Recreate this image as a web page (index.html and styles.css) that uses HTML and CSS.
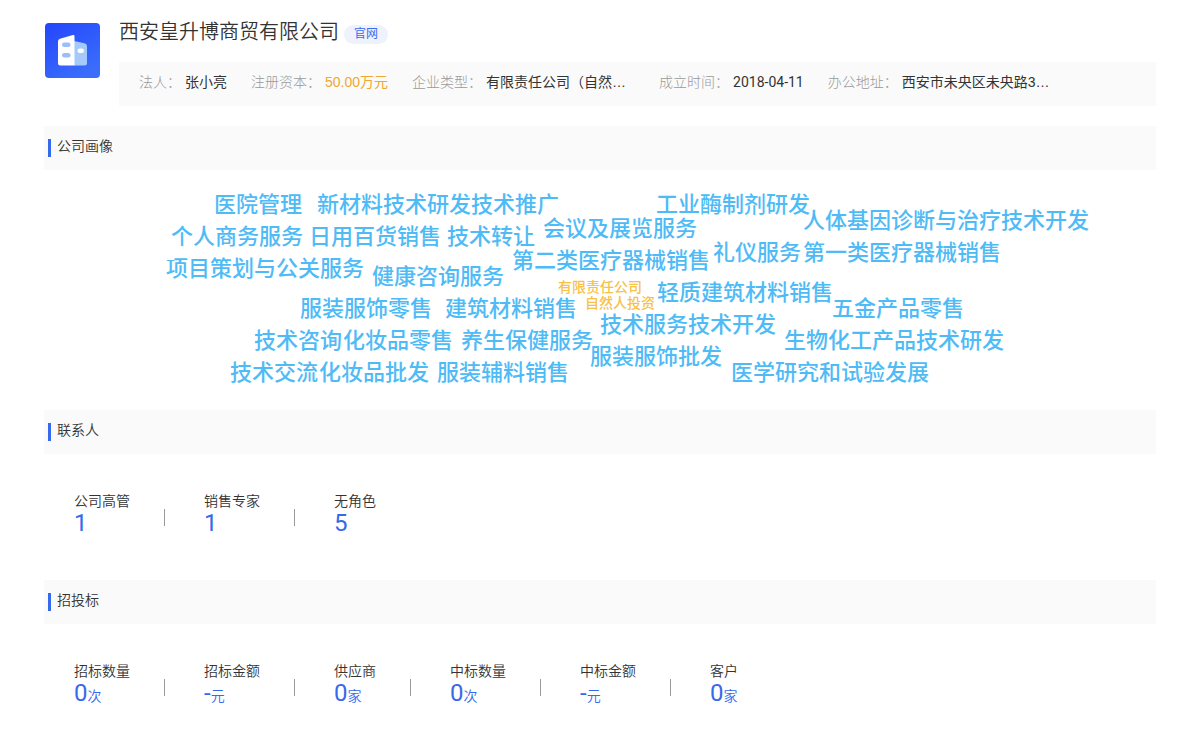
FILE: index.html
```html
<!DOCTYPE html>
<html lang="zh-CN">
<head>
<meta charset="utf-8">
<meta name="viewport" content="width=device-width, initial-scale=1">
<title>西安皇升博商贸有限公司</title>
<link rel="stylesheet" href="styles.css">
</head>
<body>
<main class="page">
  <header class="company">
    <svg class="logo" viewBox="0 0 55 55" aria-hidden="true">
      <defs>
        <linearGradient id="tile" x1="0" y1="0" x2="0.6" y2="1">
          <stop offset="0" stop-color="#2346fb"/>
          <stop offset="1" stop-color="#3a6dfb"/>
        </linearGradient>
      </defs>
      <rect width="55" height="55" rx="4" fill="url(#tile)"/>
      <path d="M29 18l10.500 2.200q2.500.6 2.500 3V40q0 2.500-2.500 2.500H29z" fill="#a3c9fd"/>
      <path d="M15 15.700q-2 .5-2 2.500V40q0 2.500 2.500 2.500H29.500V13.200q0-1.700-1.500-1.200z" fill="#fff"/>
      <rect x="17" y="19.500" width="8.500" height="4.500" rx="2.200" fill="#9dbdf8"/>
      <rect x="17" y="30" width="8.500" height="4.500" rx="2.200" fill="#9dbdf8"/>
      <rect x="32.500" y="25.500" width="6.500" height="4.500" rx="2.200" fill="#fff"/>
    </svg>
    <div class="company-main">
      <div class="company-title">
        <h1 class="company-name">西安皇升博商贸有限公司</h1>
        <a class="site-link" href="#">官网</a>
      </div>
      <dl class="facts">
        <div class="fact"><dt>法人：</dt><dd>张小亮</dd></div>
        <div class="fact"><dt>注册资本：</dt><dd class="money">50.00万元</dd></div>
        <div class="fact"><dt>企业类型：</dt><dd class="long">有限责任公司（自然…</dd></div>
        <div class="fact"><dt>成立时间：</dt><dd class="date">2018-04-11</dd></div>
        <div class="fact"><dt>办公地址：</dt><dd class="long">西安市未央区未央路3…</dd></div>
      </dl>
    </div>
  </header>

  <section>
    <h2 class="section-title">公司画像</h2>
    <ul class="cloud">
      <li style="--x:-386px;--y:19px">医院管理</li>
      <li style="--x:-283px;--y:19px">新材料技术研发</li>
      <li style="--x:-129px;--y:19px">技术推广</li>
      <li style="--x:56px;--y:19px">工业酶制剂研发</li>
      <li style="--x:203px;--y:35px">人体基因诊断与治疗技术开发</li>
      <li style="--x:-429px;--y:51px">个人商务服务</li>
      <li style="--x:-291px;--y:51px">日用百货销售</li>
      <li style="--x:-153px;--y:51px">技术转让</li>
      <li style="--x:-57px;--y:43px">会议及展览服务</li>
      <li style="--x:-434px;--y:83px">项目策划与公关服务</li>
      <li style="--x:-228px;--y:91px">健康咨询服务</li>
      <li style="--x:-88px;--y:75px">第二类医疗器械销售</li>
      <li style="--x:113px;--y:67px">礼仪服务</li>
      <li style="--x:203px;--y:67px">第一类医疗器械销售</li>
      <li class="small" style="--x:-42px;--y:101px">有限责任公司</li>
      <li class="small" style="--x:-15px;--y:117px">自然人投资</li>
      <li style="--x:57px;--y:107px">轻质建筑材料销售</li>
      <li style="--x:-300px;--y:123px">服装服饰零售</li>
      <li style="--x:-155px;--y:123px">建筑材料销售</li>
      <li style="--x:232px;--y:123px">五金产品零售</li>
      <li style="--x:0px;--y:139px">技术服务技术开发</li>
      <li style="--x:-346px;--y:155px">技术咨询</li>
      <li style="--x:-257px;--y:155px">化妆品零售</li>
      <li style="--x:-139px;--y:155px">养生保健服务</li>
      <li style="--x:184px;--y:155px">生物化工产品技术研发</li>
      <li style="--x:-10px;--y:171px">服装服饰批发</li>
      <li style="--x:-370px;--y:187px">技术交流</li>
      <li style="--x:-281px;--y:187px">化妆品批发</li>
      <li style="--x:-163px;--y:187px">服装辅料销售</li>
      <li style="--x:131px;--y:187px">医学研究和试验发展</li>
    </ul>
  </section>

  <section>
    <h2 class="section-title">联系人</h2>
    <dl class="stats">
      <div class="stat"><dt>公司高管</dt><dd>1</dd></div>
      <div class="stat"><dt>销售专家</dt><dd>1</dd></div>
      <div class="stat"><dt>无角色</dt><dd>5</dd></div>
    </dl>
  </section>

  <section>
    <h2 class="section-title">招投标</h2>
    <dl class="stats">
      <div class="stat"><dt>招标数量</dt><dd>0<small>次</small></dd></div>
      <div class="stat"><dt>招标金额</dt><dd>-<small>元</small></dd></div>
      <div class="stat"><dt>供应商</dt><dd>0<small>家</small></dd></div>
      <div class="stat"><dt>中标数量</dt><dd>0<small>次</small></dd></div>
      <div class="stat"><dt>中标金额</dt><dd>-<small>元</small></dd></div>
      <div class="stat"><dt>客户</dt><dd>0<small>家</small></dd></div>
    </dl>
  </section>
</main>
</body>
</html>
```
FILE: styles.css
```css
* {
  box-sizing: border-box;
}

body {
  margin: 0;
  background: #fff;
  color: #333;
  font: 350 14px/22px "Liberation Sans", "Noto Sans CJK SC", sans-serif;
}

h1, h2, dl, dd, ul {
  margin: 0;
  padding: 0;
}

.page {
  padding: 16px 44px 0;
}

.company {
  display: flex;
  gap: 19px;
  margin-bottom: 20px;
  padding-left: 1px;
}

.logo {
  flex: none;
  width: 55px;
  height: 55px;
  margin-top: 7px;
}

.company-main {
  flex: 1;
  min-width: 0;
}

.company-title {
  display: flex;
  align-items: flex-start;
  gap: 5px;
  margin-bottom: 14px;
}

.company-name {
  font-size: 20px;
  line-height: 32px;
  font-weight: 350;
}

.site-link {
  margin-top: 9px;
  padding: 0 10px;
  border-radius: 10px;
  background: #edf2fd;
  color: #3a6be8;
  font-size: 12px;
  line-height: 19px;
  font-weight: 400;
  text-decoration: none;
}

.facts {
  display: flex;
  flex-wrap: wrap;
  gap: 0 24px;
  padding: 9px 20px 13px;
  background: #fafafa;
}

.fact {
  display: flex;
  gap: 4px;
}

.fact dt {
  color: #999;
  font-weight: 300;
}

.fact dd {
  font-weight: 400;
}

.fact .money {
  color: #f0a72f;
}

.fact .date {
  font-family: Roboto, "Liberation Sans", sans-serif;
}

.long {
  min-width: 149px;
  white-space: nowrap;
}

.section-title {
  display: flex;
  gap: 6px;
  padding: 9px 4px 13px;
  background: #fafafa;
  font-size: 14px;
  font-weight: 350;
}

.section-title::before {
  content: "";
  width: 3px;
  height: 18px;
  margin-top: 4px;
  background: #346aeb;
}

.cloud {
  position: relative;
  height: 240px;
  list-style: none;
  color: #4fbbf6;
  font-size: 22px;
  line-height: 32px;
  font-weight: 500;
}

.cloud li {
  position: absolute;
  left: calc(50% + var(--x));
  top: var(--y);
  white-space: nowrap;
}

.cloud .small {
  color: #f7c148;
  font-size: 14px;
}

.stats {
  display: flex;
  flex-wrap: wrap;
  padding: 36px 30px 44px;
}

.stat {
  display: grid;
  grid-template-columns: auto auto;
  grid-template-rows: 22px 24px;
}

.stat:not(:last-child)::after {
  content: "";
  grid-column: 2;
  grid-row: 1 / 3;
  width: 1px;
  height: 17px;
  margin: 19px 39px 0 34px;
  background: #999;
}

.stat dt,
.stat dd {
  grid-column: 1;
}

.stat dd {
  color: #346aeb;
  font-family: Roboto, "Noto Sans CJK SC", sans-serif;
  font-size: 24px;
  line-height: 22px;
  font-weight: 400;
}

.stat small {
  font-size: 14px;
  font-weight: 350;
}
```
